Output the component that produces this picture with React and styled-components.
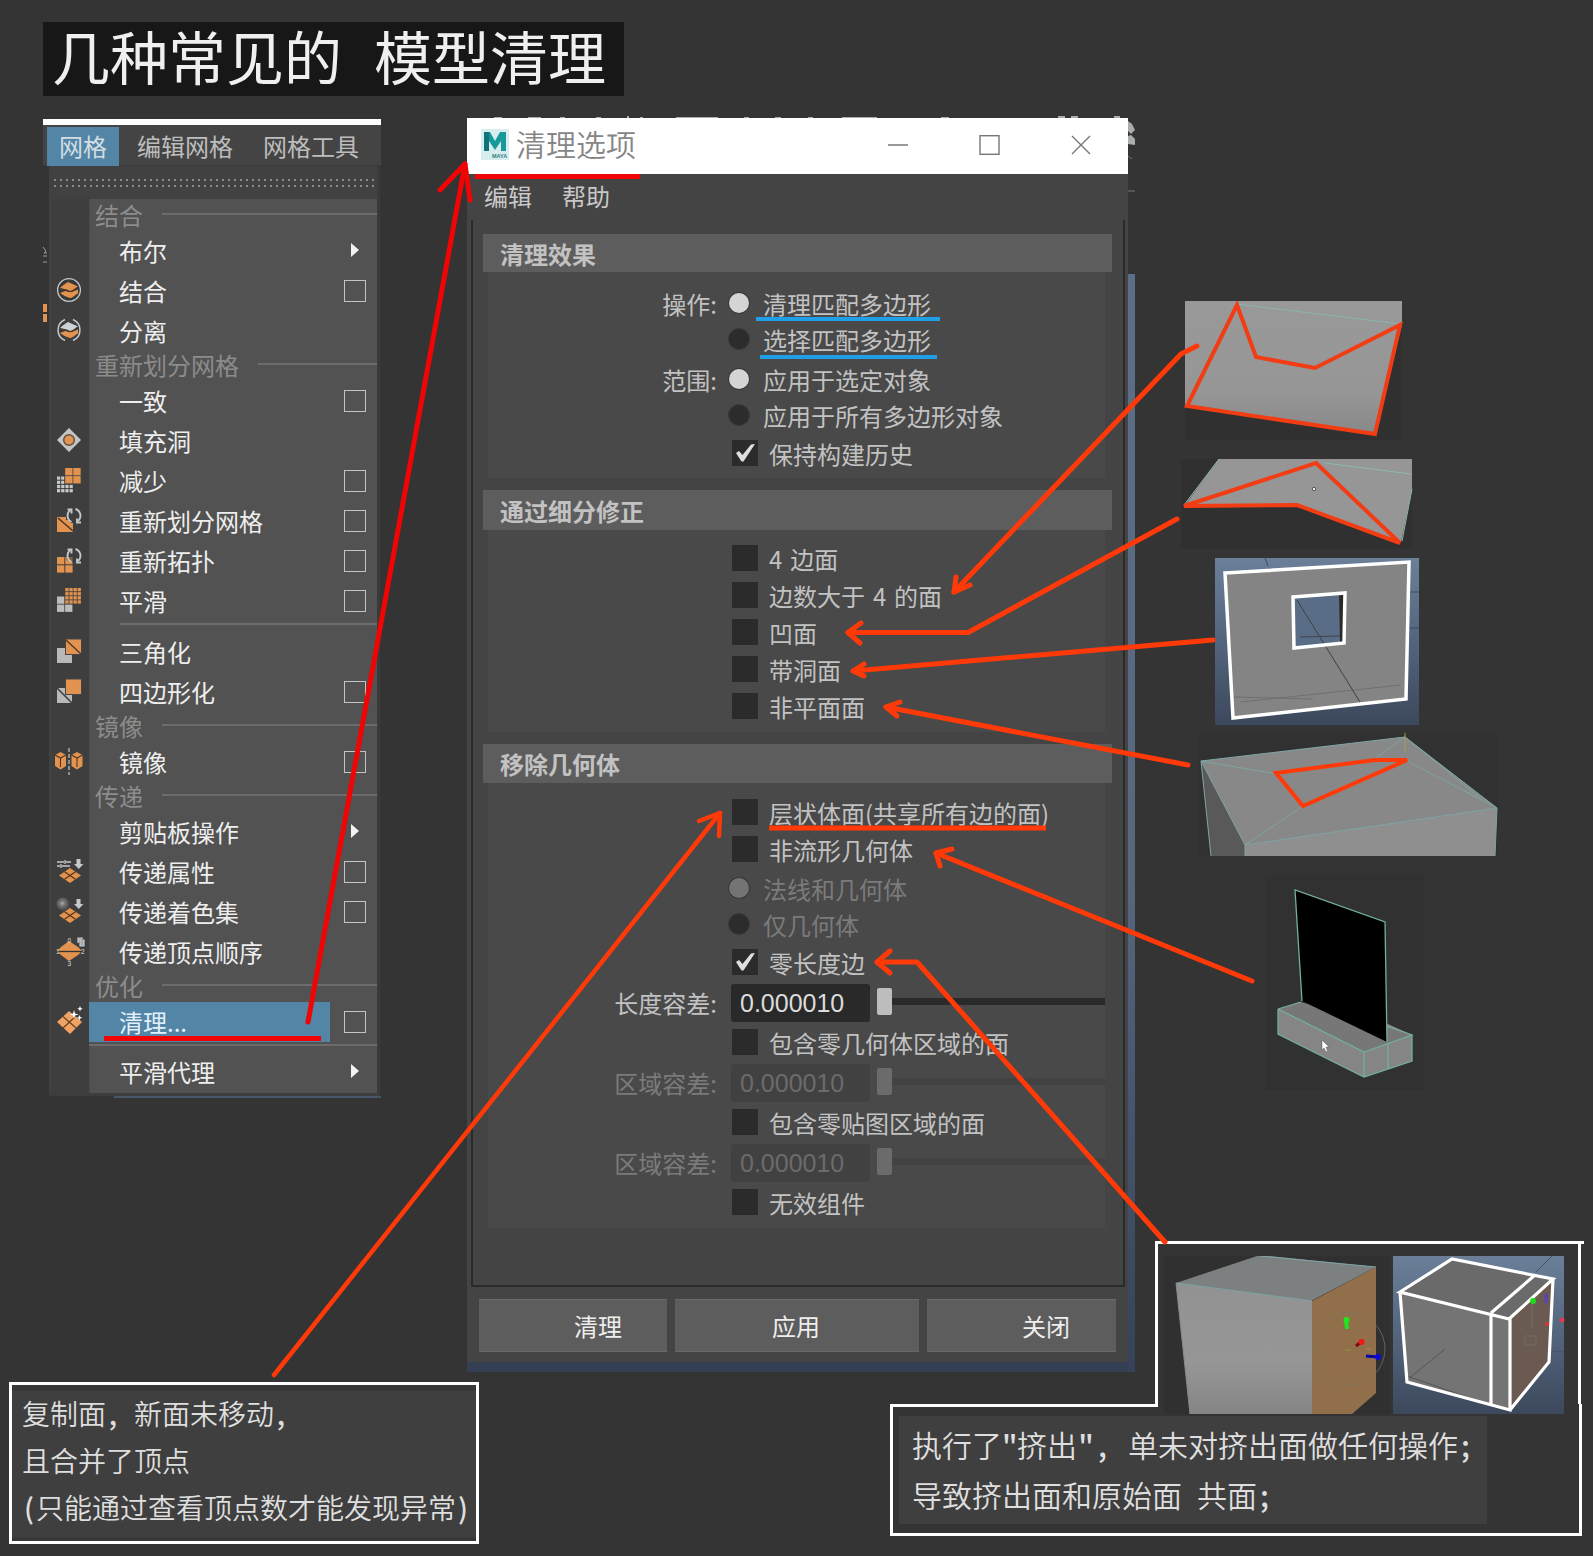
import React from "react";
import styled, { createGlobalStyle, css } from "styled-components";

const ORANGE = "#ff3a08";
const RED = "#f10404";
const CLAY = "#e2934f";
const PALE = "#c4c8ca";

const GlobalStyle = createGlobalStyle`
  * { box-sizing: border-box; }
  body {
    margin: 0;
    background: #343434;
    font-family: "Noto Sans CJK SC", "Noto Sans", sans-serif;
  }
`;

const Page = styled.main`
  position: relative;
  width: 1593px;
  height: 1556px;
  padding-top: 22px;
  overflow: hidden;
  background: #343434;
  font-size: 24px;
  line-height: 1;
  color: #c8c8c8;
`;

const Title = styled.h1`
  width: 581px;
  height: 74px;
  margin: 0 0 22px 43px;
  padding-left: 9px;
  background: #171717;
  color: #efefef;
  font-size: 58px;
  font-weight: 400;
  line-height: 67px;
  word-spacing: 19px;
  white-space: nowrap;
`;

const Columns = styled.div`
  display: flex;
  align-items: flex-start;
  height: 1264px;
`;

/* ---------- mesh menu ---------- */

const MenuShot = styled.section`
  width: 338px;
  margin: 1px 0 0 43px;
  border-top: 6px solid #fff;
`;

const TabBar = styled.nav`
  display: flex;
  height: 41px;
  padding: 2px 0 0 4px;
  background: #444;
  border-bottom: 1px solid #3a3a3a;
`;

const Tab = styled.span`
  height: 39px;
  padding: 0 12px;
  margin-right: ${(p) => (p.$active ? 6 : 5)}px;
  & + & { padding-right: 13px; }
  line-height: 38px;
  white-space: nowrap;
  color: ${(p) => (p.$active ? "#d3dde3" : "#bdbdbd")};
  background: ${(p) => (p.$active ? "#5285a6" : "transparent")};
`;

const MenuPanel = styled.div`
  width: 331px;
  margin-left: 6px;
  padding-left: 3px;
  background: #414141;
  border-right: 3px solid #3a3a3a;
  border-bottom: 3px solid #3d3d3d;
`;

const Grip = styled.div`
  height: 33px;
  padding-top: 11px;
  &::before {
    content: "";
    display: block;
    height: 12px;
    background: radial-gradient(circle, #8a8a8a 0.9px, transparent 1.4px) 0 0 / 6px 6px;
  }
`;

const MenuBody = styled.div`
  padding: 3px 0 0;
  background: linear-gradient(90deg, #3e3e3e 37px, #4a4a4a 37px, #525252 39px);
`;

const MenuRow = styled.div`
  display: grid;
  grid-template-columns: 37px 241px 47px;
  height: 40px;
  align-items: center;
`;

const MenuIcon = styled.span`
  height: 28px;
  padding-left: 4px;
  margin-top: -4px;
  svg { display: block; overflow: visible; }
`;

const MenuLabel = styled.span`
  height: 40px;
  padding-left: 30px;
  line-height: 37px;
  white-space: nowrap;
  color: ${(p) => (p.$active ? "#e3f0fb" : "#eee")};
  background: ${(p) => (p.$active ? "#5285a6" : "transparent")};
  margin-top: ${(p) => (p.$active ? "-3px" : "0")};
  ${(p) => p.$active && css`line-height: 40px;`}
`;

const OptionBox = styled.span`
  width: 22px;
  height: 22px;
  margin: -3px 0 0 14px;
  border: 1px solid #c4c4c4;
`;

const SubArrow = styled.span`
  width: 0;
  margin: -5px 0 0 21px;
  border-left: 8px solid #f2f2f2;
  border-top: 7px solid transparent;
  border-bottom: 7px solid transparent;
`;

const MenuHeading = styled.div`
  display: flex;
  align-items: center;
  height: 30px;
  padding: 0 0 4px 43px;
  color: #8c8c8c;
  white-space: nowrap;
  &::after {
    content: "";
    flex: 1;
    height: 2px;
    margin: -3px 0 0 19px;
    background: #6c6c6c;
  }
`;

const MenuRule = styled.div`
  height: ${(p) => p.$h}px;
  padding: 1px 0 0 ${(p) => p.$inset}px;
  &::before {
    content: "";
    display: block;
    height: 2px;
    background: #6c6c6c;
  }
`;

const MenuFoot = styled.div`
  height: 2px;
  margin: 0 0 0 71px;
  background: #47566a;
`;

/* ---------- cleanup dialog ---------- */

const Dialog = styled.section`
  width: 668px;
  height: 1254px;
  margin: 0 1px 0 86px;
  background: linear-gradient(#343434 156px, #5d6f86 156px, #56677e 60%, #35425a) right / 7px 100% no-repeat,
    #343f54;
`;

const Window = styled.div`
  width: 661px;
  height: 1244px;
  background: #444;
`;

const TitleBar = styled.header`
  display: flex;
  align-items: center;
  height: 56px;
  padding: 0 37px 0 14px;
  background: #fff;
  color: #868686;
  font-size: 30px;
`;

const AppLogo = styled.svg`
  display: block;
  margin-top: -3px;
`;

const WindowTitle = styled.span`
  flex: 1;
  margin: -6px 0 0 7px;
  font-weight: 350;
`;

const WindowButtons = styled.span`
  display: flex;
  gap: 71px;
  margin-top: -3px;
`;

const MenuLine = styled.div`
  display: flex;
  gap: 30px;
  height: 46px;
  padding: 10px 18px 0 17px;
  line-height: 24px;
`;

const Frame = styled.div`
  height: 1067px;
  margin: 0 3px 0 4px;
  padding: 14px 11px 0 10px;
  border: 2px solid #2a2a2a;
  border-top: 0;
`;

const SectionHead = styled.h2`
  height: ${(p) => p.$h}px;
  margin: 0;
  padding-left: 17px;
  background: #5d5d5d;
  color: #c2c2c2;
  font-size: 24px;
  font-weight: 700;
  line-height: ${(p) => p.$h + 1}px;
`;

const SectionBody = styled.div`
  height: ${(p) => p.$h}px;
  margin: 0 7px ${(p) => p.$after}px 5px;
  padding-top: ${(p) => p.$top}px;
  background: #494949;
`;

const OptionRow = styled.div`
  display: grid;
  grid-template-columns: 229px auto auto 1fr;
  align-items: center;
  height: ${(p) => p.$h || 36}px;
  margin-top: ${(p) => p.$gap || 0}px;
  white-space: nowrap;
  word-spacing: 2.5px;
  color: ${(p) => (p.$off ? "#7b7b7b" : "#c2c2c2")};
`;

const RowLabel = styled.span`
  text-align: right;
`;

const Radio = styled.i`
  width: 20px;
  height: 20px;
  margin: -3px 14px 0 12px;
  border-radius: 50%;
  box-shadow: 0 0 0 1px #3a3a3a;
  background: ${(p) => (p.$on ? (p.$off ? "#747474" : "#d4d4d4") : "#2c2c2c")};
`;

const Check = styled.i`
  display: block;
  width: 26px;
  height: 26px;
  margin: -2px 11px 0 15px;
  background: #2b2b2b;
  svg { display: block; }
`;

const NumberField = styled.span`
  width: 139px;
  height: 38px;
  margin-left: 14px;
  padding-left: 9px;
  border-radius: 3px;
  font: 25px/39px "Liberation Sans", Arial, sans-serif;
  color: ${(p) => (p.$off ? "#6b6b6b" : "#dcdcdc")};
  background: ${(p) => (p.$off ? "#414141" : "#292929")};
`;

const Slider = styled.span`
  display: flex;
  align-items: center;
  width: 228px;
  margin: -3px 0 0 7px;
  &::before {
    content: "";
    width: 15px;
    height: 27px;
    border-radius: 2px;
    background: ${(p) => (p.$off ? "#6b6b6b" : "#bdbdbd")};
  }
  &::after {
    content: "";
    flex: 1;
    height: 7px;
    background: ${(p) => (p.$off ? "#424242" : "#2a2a2a")};
  }
`;

const ButtonRow = styled.footer`
  display: grid;
  grid-template-columns: 188px 244px 189px;
  column-gap: 8px;
  padding: 12px 0 0 12px;
`;

const Button = styled.button`
  height: 53px;
  padding: 0 0 0 ${(p) => p.$inset}px;
  border: 0;
  border-top: 1px solid #6a6a6a;
  border-bottom: 1px solid #686868;
  background: #5d5d5d;
  color: #eee;
  font: 24px "Noto Sans CJK SC", sans-serif;
  text-align: left;
`;

/* ---------- viewport captures ---------- */

const Captures = styled.aside`
  display: flex;
  flex-direction: column;
  width: 457px;
  padding-top: 183px;
`;

const Capture = styled.svg`
  display: block;
  flex: none;
  width: ${(p) => p.width}px;
  height: ${(p) => p.height}px;
  margin: 0 0 ${(p) => p.$after}px ${(p) => p.$left}px;
`;

const NoteTop = styled.div`
  display: flex;
  width: 429px;
  height: 163px;
  flex: none;
  margin-left: 19px;
  padding: 12px 0 0 4px;
  border: solid #fff;
  border-width: 3px 0 0 3px;
  background: linear-gradient(#fff, #fff) 420px 0 / 3px 100% no-repeat;
`;

/* ---------- written notes ---------- */

const Notes = styled.div`
  display: flex;
  align-items: flex-start;
`;

const LeftNote = styled.div`
  width: 470px;
  height: 162px;
  margin-left: 9px;
  padding: 5px 0 0 10px;
  border: 3px solid #fff;
  background: #3f3f3f;
  box-shadow: inset 0 6px #383838, inset 0 -4px #383838;
`;

const RightNote = styled.div`
  width: 692px;
  height: 132px;
  margin: 22px 0 0 411px;
  padding: 12px 0 0 6px;
  border: solid #fff;
  border-width: 0 3px 3px 3px;
  background: linear-gradient(#fff, #fff) 0 0 / 265px 3px no-repeat;
`;

const NotePaper = styled.div`
  width: 588px;
  height: 108px;
  padding: 3px 0 0 13px;
  background: #3f3f3f;
`;

const NoteLine = styled.p`
  margin: 0;
  font-size: ${(p) => p.$size}px;
  line-height: ${(p) => p.$pitch}px;
  font-weight: 350;
  color: #dedede;
  white-space: nowrap;
`;

const Half = styled.span`
  display: inline-block;
  width: ${(p) => (p.$wide ? 0.6 : 0.5)}em;
  text-align: center;
  font-weight: 500;
`;

const Markup = styled.svg`
  position: absolute;
  inset: 0;
  pointer-events: none;
`;

/* ---------- menu icons ---------- */

const Tiles = ({ x, y, n, size, gap, fill, skip = [] }) => {
  const out = [];
  for (let r = 0; r < n; r++)
    for (let c = 0; c < n; c++)
      if (!skip.includes(r * n + c))
        out.push(
          <rect key={r * n + c} x={x + c * (size + gap)} y={y + r * (size + gap)} width={size} height={size} fill={fill} />
        );
  return <g>{out}</g>;
};

const Sheets = ({ top }) => (
  <>
    <path d="M3 10C6 7 8 6 11 4l10 4.500c-3 1-4 4-8 4.500-4-2-6-2-10-3z" fill={top} />
    <path d="M3 15c3-1 4-2 6-2 2 1 5 1.500 7 .5l5-2v4c-3 1-4 4-8 4.500-4-1-7-3-10-5z" fill={CLAY} />
    <path d="M3 12.500c3-1.500 5-.8 10 1.200 4-.7 5-3 8.500-4" stroke="#4a3524" strokeWidth="1.100" fill="none" />
  </>
);

const Cycle = () => (
  <g fill="none" stroke={PALE} strokeWidth="1.900">
    <path d="M14.500 14A7 7 0 0 1 13.500 2" />
    <path d="M10.500 1.500h4v4" />
    <path d="M18.500 1a7 7 0 0 1 2.500 12" />
    <path d="M24 14.500h-4v-4" />
  </g>
);

const Plane = () => (
  <>
    <path d="M2 16.500 13 9l11 7.500L13 24z" fill={CLAY} />
    <path d="M7.500 12.700l11 7.500M18.500 12.700l-11 7.500" stroke="#50351f" strokeWidth="1.200" />
  </>
);

const Drop = () => <path d="M19.500 0h4v5H26.500l-4.700 5L17 5h2.500z" fill={PALE} />;

const Cube = ({ x }) => (
  <g transform={`translate(${x} 0)`}>
    <path d="M0 6l5.500-3L11 6v11l-5.500 3.500L0 17z" fill={CLAY} />
    <path d="M0 6l5.500 3L11 6M5.500 9v9" stroke="#51361f" strokeWidth="1.100" fill="none" />
  </g>
);

const icons = {
  combine: (
    <>
      <circle cx="12" cy="12" r="11.400" fill="#383838" stroke={PALE} strokeWidth="1.300" />
      <Sheets top={CLAY} />
    </>
  ),
  separate: (
    <>
      <path d="M8 1.500a11.400 11.400 0 0 0 0 21M16 1.500a11.400 11.400 0 0 1 0 21" fill="none" stroke={PALE} strokeWidth="1.500" />
      <Sheets top="#ccd3d8" />
    </>
  ),
  fill: (
    <>
      <path d="M12 0l12 12-12 12L0 12z" fill="#c4c4c4" />
      <circle cx="12" cy="12" r="5.300" fill={CLAY} stroke="#5e5145" strokeWidth="1.500" />
    </>
  ),
  reduce: (
    <>
      <Tiles x={0} y={8.500} n={4} size={3.200} gap={1} fill={PALE} />
      <rect x="7.500" y="0" width="17" height="16" fill="#444" />
      <Tiles x={8.200} y={0} n={2} size={7.300} gap={0.8} fill={CLAY} />
    </>
  ),
  remesh: (
    <>
      <path d="M0 9h9v3h2l3 3h2v9H0z" fill={CLAY} />
      <path d="M1 10l15 13" stroke="#4b3525" strokeWidth="1.500" />
      <Cycle />
    </>
  ),
  retopo: (
    <>
      <Tiles x={0} y={9} n={2} size={7.300} gap={1} fill={CLAY} />
      <path d="M9.500 12V4l6-3h9v14h-8z" fill="#3e3e3e" opacity=".6" />
      <Cycle />
    </>
  ),
  smooth: (
    <>
      <Tiles x={0} y={8.500} n={2} size={7.300} gap={0.8} fill="#bcbcbc" skip={[1]} />
      <Tiles x={8.300} y={0} n={4} size={3.300} gap={0.8} fill={CLAY} />
    </>
  ),
  triangulate: (
    <>
      <rect y="9" width="15" height="15" fill="#b9b9b9" />
      <rect x="8.500" width="16" height="15.500" fill={CLAY} stroke="#444" />
      <path d="M9 1l15 14" stroke="#4b3525" strokeWidth="1.300" />
    </>
  ),
  quad: (
    <>
      <rect y="9" width="15" height="15" fill="#b9b9b9" />
      <path d="M0 9l15 15" stroke="#3c3c3c" strokeWidth="1.500" />
      <rect x="8.500" width="16" height="15.500" fill={CLAY} stroke="#444" />
    </>
  ),
  mirror: (
    <>
      <Cube x={-2} />
      <Cube x={14.500} />
      <path d="M12-1v27" stroke={PALE} strokeWidth="1.200" strokeDasharray="4 2" />
    </>
  ),
  attributes: (
    <>
      <path d="M0 3h7M9 3h5M0 7h3M5 7h8M8 1v4M4 5v4" stroke={PALE} strokeWidth="1.300" />
      <Drop />
      <Plane />
    </>
  ),
  shading: (
    <>
      <defs>
        <radialGradient id="ball" cx=".45" cy=".45">
          <stop offset="0" stopColor="#aaa" />
          <stop offset=".4" stopColor="#777" />
          <stop offset="1" stopColor="#4d4d4d" />
        </radialGradient>
      </defs>
      <circle cx="6" cy="5" r="6.500" fill="url(#ball)" />
      <Drop />
      <Plane />
    </>
  ),
  order: (
    <>
      <path d="M12 2l9 6 4 4-4 4-9 6-8-6-4-4 4-4z" fill={CLAY} />
      <path d="M0 12.500h25" stroke="#333" strokeWidth="1.300" />
      <path d="M21 4V-1h5M23 1h4v6h-4z" stroke={PALE} fill="#aaa" strokeWidth="1.200" />
      <g fill="#ddd" fontSize="6.500" fontFamily="Liberation Sans, sans-serif">
        <text x="10.500" y="4">0</text>
        <text x="-1" y="15">1</text>
        <text x="24" y="15">2</text>
        <text x="10.500" y="27">3</text>
      </g>
    </>
  ),
  cleanup: (
    <>
      <path d="M0 13L12 2l13 11-12 12z" fill="#efa263" />
      <path d="M6 7.500L19 19M18 8L6 19" stroke="#664022" strokeWidth="1.200" />
      <path d="M17 1l1 3.500 3.500 1-3.500 1-1 3.500-1-3.500-3.500-1 3.500-1zM23-3l.8 2 2 .8-2 .8-.8 2-.8-2-2-.8 2-.8zM22.500 6l.8 2 2 .8-2 .8-.8 2-.8-2-2-.8 2-.8z" fill="#fff" />
    </>
  ),
};

const menu = [
  { head: "结合" },
  { label: "布尔", sub: true },
  { label: "结合", icon: "combine", box: true },
  { label: "分离", icon: "separate" },
  { head: "重新划分网格" },
  { label: "一致", box: true },
  { label: "填充洞", icon: "fill" },
  { label: "减少", icon: "reduce", box: true },
  { label: "重新划分网格", icon: "remesh", box: true },
  { label: "重新拓扑", icon: "retopo", box: true },
  { label: "平滑", icon: "smooth", box: true },
  { rule: 11, inset: 68 },
  { label: "三角化", icon: "triangulate" },
  { label: "四边形化", icon: "quad", box: true },
  { head: "镜像" },
  { label: "镜像", icon: "mirror", box: true },
  { head: "传递" },
  { label: "剪贴板操作", sub: true },
  { label: "传递属性", icon: "attributes", box: true },
  { label: "传递着色集", icon: "shading", box: true },
  { label: "传递顶点顺序", icon: "order" },
  { head: "优化" },
  { label: "清理...", icon: "cleanup", box: true, active: true },
  { rule: 10, inset: 37 },
  { label: "平滑代理", sub: true },
];

function MenuEntry({ entry }) {
  if (entry.head) return <MenuHeading>{entry.head}</MenuHeading>;
  if (entry.rule) return <MenuRule $h={entry.rule} $inset={entry.inset} />;
  return (
    <MenuRow>
      <MenuIcon>
        {entry.icon && (
          <svg width="28" height="28" viewBox="-1 -2 28 28">
            {icons[entry.icon]}
          </svg>
        )}
      </MenuIcon>
      <MenuLabel $active={entry.active}>{entry.label}</MenuLabel>
      {entry.box && <OptionBox />}
      {entry.sub && <SubArrow />}
    </MenuRow>
  );
}

function RadioRow({ label, text, on, off, gap }) {
  return (
    <OptionRow $gap={gap} $off={off}>
      <RowLabel>{label}</RowLabel>
      <Radio $on={on} $off={off} />
      <span>{text}</span>
    </OptionRow>
  );
}

function CheckRow({ text, on, gap, h = 37 }) {
  return (
    <OptionRow $gap={gap} $h={h}>
      <RowLabel />
      <Check>
        {on && (
          <svg width="26" height="26" viewBox="0 0 26 26">
            <path d="M4 13l3-2 3.500 4L19 4.500l4-.5-11.500 17.500H9.500z" fill="#dedede" />
          </svg>
        )}
      </Check>
      <span>{text}</span>
    </OptionRow>
  );
}

function ToleranceRow({ label, off, gap }) {
  return (
    <OptionRow $h={40} $off={off} $gap={gap}>
      <RowLabel>{label}</RowLabel>
      <NumberField $off={off}>0.000010</NumberField>
      <Slider $off={off} />
    </OptionRow>
  );
}

const Arrow = ({ points, head, color = ORANGE, width = 5 }) => (
  <g fill="none" stroke={color} strokeWidth={width} strokeLinecap="round" strokeLinejoin="round">
    <polyline points={points} />
    <polyline points={head} />
  </g>
);

function ViewportCaptures() {
  return (
    <Captures>
      <Capture width={219} height={140} $left={48} $after={18} viewBox="1184 301 219 140">
        <defs>
          <linearGradient id="clayA" x1="0" y1="0" x2="0" y2="1">
            <stop offset="0" stopColor="#999" />
            <stop offset=".7" stopColor="#969696" />
            <stop offset="1" stopColor="#888" />
          </linearGradient>
        </defs>
        <rect x="1185" y="301" width="217" height="139" fill="#303030" />
        <path d="M1185 301h217v24l-27 109-190-29z" fill="url(#clayA)" />
        <path d="M1236 304l165 20" stroke="#8bb5aa" />
        <path d="M1187 406l50-101 19 52 59 11 85-43-25 109z" fill="none" stroke="#f23c14" strokeWidth="4" />
      </Capture>
      <Capture width={234} height={93} $left={44} $after={6} viewBox="1180 459 234 93">
        <rect x="1181" y="459" width="231" height="90" fill="#303030" />
        <path d="M1219 459h193v30l-11 53-104-37-112 0z" fill="#969696" />
        <path d="M1219 459l-35 46M1325 463l86 11M1412 489l-10 52" stroke="#8db9ac" fill="none" />
        <path d="M1184 506l132-43 84 80-103-38z" fill="none" stroke="#f23c14" strokeWidth="4" />
        <circle cx="1314" cy="489" r="1.700" fill="#eee" stroke="#555" />
      </Capture>
      <Capture width={204} height={167} $left={79} $after={8} viewBox="1215 558 204 167">
        <defs>
          <linearGradient id="skyA" x1="0" y1="0" x2="0" y2="1">
            <stop offset="0" stopColor="#6b7f98" />
            <stop offset=".5" stopColor="#53657d" />
            <stop offset="1" stopColor="#3c485c" />
          </linearGradient>
        </defs>
        <rect x="1215" y="558" width="204" height="167" fill="url(#skyA)" />
        <path d="M1265 558l3 8M1408 592h11M1408 628h11M1280 712l130 8" stroke="#3d4b60" />
        <path d="M1225 573l184-11-3 137-173 19z" fill="#848484" />
        <path d="M1241 702l160-17M1233 697l80 2" stroke="#707070" />
        <path d="M1293 597l52-4-1 50-50 5z" fill="#5a6d86" />
        <path d="M1339 593h6v50h-5z" fill="#292929" />
        <path d="M1297 600l63 102" stroke="#3b4048" />
        <path d="M1300 637l40-1" stroke="#444" />
        <path d="M1225 573l184-11-3 137-173 19zM1293 597l52-4-1 50-50 5z" fill="none" stroke="#fff" strokeWidth="3.500" />
      </Capture>
      <Capture width={300} height={123} $left={62} $after={18} viewBox="1198 733 300 123">
        <rect x="1199" y="733" width="299" height="123" fill="#313131" />
        <path d="M1201 761l204-24 92 71-2 48h-284z" fill="#8f8f8f" />
        <path d="M1201 761l204-24 92 71-252 37z" fill="#888" />
        <path d="M1201 761l44 84v11h-34z" fill="#595959" />
        <g fill="none" stroke="#7fa3a4">
          <path d="M1201 761l204-24 92 71-252 37zM1201 761l10 95M1245 845v11M1497 808l-2 48" />
          <path d="M1201 761l76 13M1405 737l-28 20M1245 845l58-39M1497 808l-90-47M1405 737l75 61" />
        </g>
        <path d="M1405 733v19" stroke="#a99c53" />
        <path d="M1276 773l99-13 32 0-104 46z" fill="none" stroke={ORANGE} strokeWidth="4" />
      </Capture>
      <Capture width={160} height={218} $left={128} $after={149} viewBox="1264 874 160 218">
        <rect x="1265" y="875" width="159" height="215" fill="#313131" />
        <path d="M1278 1009l22-7 88 22 24 11v26l-48 16-86-43z" fill="#858585" />
        <path d="M1278 1009l22-7 112 33-48 17z" fill="#777" />
        <path d="M1295 890l90 32 2 120-85-41z" fill="#000" />
        <g fill="none" stroke="#72b09c" strokeWidth="1.300">
          <path d="M1302 1001l-7-111 90 32 2 120M1278 1009l86 43 48-17-25-9M1278 1009v25l86 43 48-16v-26M1364 1052v25M1388 1043v26M1278 1009l23-7" />
        </g>
        <path d="M1322 1040v10l2-2 2 4 1.500-1-1.500-4h3z" fill="#fff" stroke="#444" strokeWidth=".4" />
      </Capture>
      <NoteTop>
        <Capture width={229} height={159} $left={0} $after={0} viewBox="1162 1256 229 159">
          <defs>
            <linearGradient id="clayB" x1="0" y1="0" x2="0" y2="1">
              <stop offset="0" stopColor="#929292" />
              <stop offset=".6" stopColor="#969696" />
              <stop offset="1" stopColor="#858585" />
            </linearGradient>
          </defs>
          <rect x="1164" y="1256" width="226" height="158" fill="#303030" />
          <path d="M1176 1283l84-28 116 12-65 34z" fill="#7d8080" />
          <path d="M1176 1283l136 18v113h-122z" fill="url(#clayB)" />
          <path d="M1312 1301l64-34v126l-24 21h-40z" fill="#916f4a" />
          <path d="M1176 1283l136 18M1260 1256l116 11" stroke="#7fa5a8" fill="none" />
          <path d="M1176 1283l14 131" stroke="#889" fill="none" />
          <circle cx="1349" cy="1349" r="36" fill="none" stroke="#807361" opacity=".7" />
          <path d="M1346 1320l1 9" stroke="#20e020" strokeWidth="4" />
          <circle cx="1346.500" cy="1320" r="3" fill="#1be91b" />
          <path d="M1356 1346l5-4" stroke="#7d0b0b" strokeWidth="3" />
          <circle cx="1361.500" cy="1342" r="3" fill="#f21818" />
          <path d="M1366 1356l12 1" stroke="#0808a0" strokeWidth="3" />
          <circle cx="1378" cy="1357" r="3" fill="#0909dc" />
          <path d="M1345 1350h6M1366 1349h5" stroke="#9c8f50" />
        </Capture>
        <Capture width={172} height={159} $left={2} $after={0} viewBox="1393 1256 172 159">
          <rect x="1393" y="1256" width="171" height="158" fill="url(#skyA)" />
          <path d="M1536 1272l26-26M1538 1350l26 2" stroke="#46546a" />
          <path d="M1400 1292l52-33 101 20-4 83-39 48-104-29z" fill="#747474" />
          <path d="M1400 1292l52-33 101 20-44 40z" fill="#6a6a6a" />
          <path d="M1509 1319l44-40-3 83-40 48z" fill="#6b5a51" />
          <path d="M1407 1380l38-31M1407 1376l80 28" stroke="#565656" />
          <path d="M1400 1292l52-33 101 20-44 40zM1400 1292l7 90 103 28V1319M1510 1410l39-48 4-83M1491 1314v91M1491 1313l44-38" fill="none" stroke="#fff" strokeWidth="3.200" />
          <path d="M1532 1301v28M1525 1336h11v9h-11z" stroke="#756c60" fill="none" />
          <circle cx="1533" cy="1301" r="3" fill="#1cdc1c" />
          <path d="M1546 1294v9" stroke="#5643c2" strokeWidth="3" />
          <circle cx="1547" cy="1324" r="2" fill="#d33" />
          <circle cx="1562" cy="1320" r="2.500" fill="#dd3b54" />
        </Capture>
      </NoteTop>
    </Captures>
  );
}

export default function App() {
  return (
    <>
      <GlobalStyle />
      <Page>
        <Title>几种常见的 模型清理</Title>
        <Columns>
          <MenuShot>
            <TabBar>
              <Tab $active>网格</Tab>
              <Tab>编辑网格</Tab>
              <Tab>网格工具</Tab>
            </TabBar>
            <MenuPanel>
              <Grip />
              <MenuBody>
                {menu.map((entry, i) => (
                  <MenuEntry key={i} entry={entry} />
                ))}
              </MenuBody>
            </MenuPanel>
            <MenuFoot />
          </MenuShot>

          <Dialog>
            <Window>
              <TitleBar>
                <AppLogo width="28" height="31" viewBox="0 0 28 31">
                  <rect width="28" height="31" fill="#d8eeee" />
                  <path d="M3 3h6l5 9 5-9h6v19h-5V12l-6 9-6-9v10H3z" fill="#17989a" />
                  <path d="M3 3h5v19H3z" fill="#0f7478" />
                  <text x="11" y="29" fontSize="5.500" fontWeight="700" fontFamily="Liberation Sans, sans-serif" fill="#2f8285">MAYA</text>
                </AppLogo>
                <WindowTitle>清理选项</WindowTitle>
                <WindowButtons>
                  <svg width="20" height="20"><path d="M0 10h20" stroke="#777" strokeWidth="1.500" /></svg>
                  <svg width="21" height="20"><rect x="1" y=".7" width="19" height="18.600" fill="none" stroke="#777" strokeWidth="1.400" /></svg>
                  <svg width="20" height="20"><path d="M1 1l18 18M19 1L1 19" stroke="#777" strokeWidth="1.400" /></svg>
                </WindowButtons>
              </TitleBar>
              <MenuLine>
                <span>编辑</span>
                <span>帮助</span>
              </MenuLine>
              <Frame>
                <SectionHead $h={38}>清理效果</SectionHead>
                <SectionBody $h={206} $top={14} $after={12}>
                  <RadioRow label="操作:" text="清理匹配多边形" on />
                  <RadioRow text="选择匹配多边形" />
                  <RadioRow label="范围:" text="应用于选定对象" on gap={4} />
                  <RadioRow text="应用于所有多边形对象" />
                  <CheckRow text="保持构建历史" on gap={1} />
                </SectionBody>
                <SectionHead $h={40}>通过细分修正</SectionHead>
                <SectionBody $h={202} $top={10} $after={12}>
                  <CheckRow text="4 边面" />
                  <CheckRow text="边数大于 4 的面" />
                  <CheckRow text="凹面" />
                  <CheckRow text="带洞面" />
                  <CheckRow text="非平面面" />
                </SectionBody>
                <SectionHead $h={39}>移除几何体</SectionHead>
                <SectionBody $h={445} $top={11} $after={0}>
                  <CheckRow text="层状体面(共享所有边的面)" />
                  <CheckRow text="非流形几何体" />
                  <RadioRow text="法线和几何体" on off gap={3} />
                  <RadioRow text="仅几何体" off />
                  <CheckRow text="零长度边" on gap={1} />
                  <ToleranceRow label="长度容差:" gap={2} />
                  <CheckRow text="包含零几何体区域的面" h={40} />
                  <ToleranceRow label="区域容差:" off />
                  <CheckRow text="包含零贴图区域的面" h={40} />
                  <ToleranceRow label="区域容差:" off />
                  <CheckRow text="无效组件" h={40} />
                </SectionBody>
              </Frame>
              <ButtonRow>
                <Button $inset={95}>清理</Button>
                <Button $inset={97}>应用</Button>
                <Button $inset={95}>关闭</Button>
              </ButtonRow>
            </Window>
          </Dialog>

          <ViewportCaptures />
        </Columns>

        <Notes>
          <LeftNote>
            <NoteLine $size={28} $pitch={47}>
              复制面<Half>,</Half><Half> </Half>新面未移动<Half>,</Half>
            </NoteLine>
            <NoteLine $size={28} $pitch={47}>且合并了顶点</NoteLine>
            <NoteLine $size={28} $pitch={47}>
              <Half>(</Half>只能通过查看顶点数才能发现异常<Half>)</Half>
            </NoteLine>
          </LeftNote>
          <RightNote>
            <NotePaper>
              <NoteLine $size={30} $pitch={50}>
                执行了<Half>"</Half>挤出<Half $wide>"</Half><Half>,</Half><Half $wide> </Half>单未对挤出面做任何操作<Half>;</Half>
              </NoteLine>
              <NoteLine $size={30} $pitch={50}>
                导致挤出面和原始面<Half> </Half>共面<Half>;</Half>
              </NoteLine>
            </NotePaper>
          </RightNote>
        </Notes>

        <Markup width="1593" height="1556">
          <g fill="#a9adae">
            <path d="M494 117h8v1h-8zM528 117h13v1h-13zM560 117h5v1h-5zM596 117h5v1h-5zM627 116h2v2h-2zM640 117h3v1h-3zM676 117h42v1h-42zM744 117h5v1h-5zM775 117h6v1h-6zM808 117h5v1h-5zM842 117h35v1h-35zM941 117h8v1h-8zM1058 116h7v2h-7zM1071 116h7v2h-7zM1114 116h6v2h-6z" />
            <path d="M1128 121l4 3 3 6-4 4-3-3zM1128 136l3-1 4 4v6l-7-1z" />
          </g>
          <path d="M1128 156l4 3M1128 191h7" stroke="#777" />
          <path d="M43 247l3 4-2 2h3M43 256h4M43 262h4" stroke="#999" fill="none" />
          <path d="M43 304h4v8h-4zM43 314h4v8h-4z" fill={CLAY} />
          <g fill="none" strokeWidth="5">
            <path d="M475 176.500h165M104 1038.500h217" stroke={RED} />
            <path d="M769 828h277" stroke={ORANGE} />
            <path d="M756 319h184M760 357h177" stroke="#1e9fe6" strokeWidth="4" />
          </g>
          <Arrow color={RED} points="308,1022 465,164" head="440,190 465,164 470,200" />
          <Arrow points="1197,346 1181,354 954,592" head="956,577 954,592 970,585" />
          <Arrow points="1177,519 968,632.500 848,632.500" head="861,623 848,632.500 860,643" />
          <Arrow points="1213,640 853,671" head="864,664 853,671 864,676" />
          <Arrow points="1188,765 886,707" head="900,702 886,707 897,716" />
          <Arrow points="1252,981 936,853" head="952,849 936,853 940,866" />
          <Arrow points="274,1375 720,813" head="699,821 720,813 719,836" width={4.500} />
          <Arrow points="1165,1242 917,962 877,962" head="890,951 877,962 890,973" />
        </Markup>
      </Page>
    </>
  );
}
